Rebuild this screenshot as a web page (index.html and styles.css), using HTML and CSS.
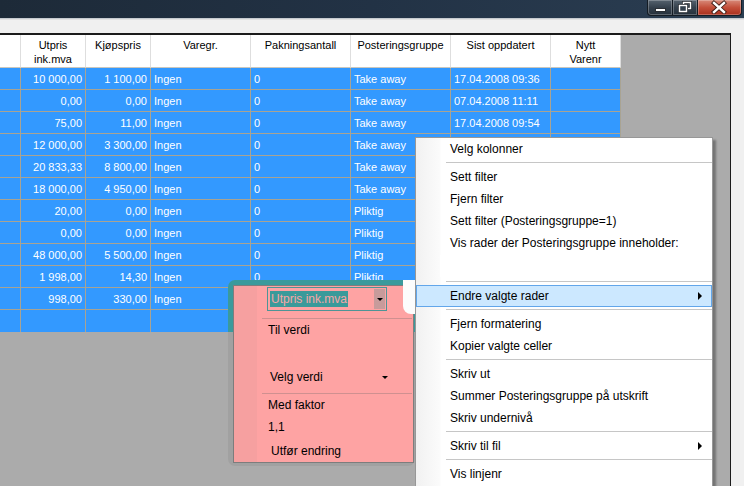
FILE: index.html
```html
<!DOCTYPE html>
<html>
<head>
<meta charset="utf-8">
<link rel="stylesheet" href="styles.css">
</head>
<body>
<div class="window">
  <div class="titlebar">
    <div class="winbtns">
      <div class="wb wb-min"><svg width="24" height="14" viewBox="0 0 24 14"><rect x="7.5" y="8.5" width="10" height="3" fill="#fff" stroke="#2a2f35" stroke-width="1"/></svg></div>
      <div class="wb wb-max"><svg width="23" height="14" viewBox="0 0 23 14"><rect x="10.5" y="2.5" width="7" height="6" fill="none" stroke="#2a2f35" stroke-width="3"/><rect x="10.5" y="2.5" width="7" height="6" fill="none" stroke="#fff" stroke-width="1.4"/><rect x="6.5" y="5.5" width="7" height="6" fill="#34414e" stroke="#2a2f35" stroke-width="3"/><rect x="6.5" y="5.5" width="7" height="6" fill="#34414e" stroke="#fff" stroke-width="1.4"/></svg></div>
      <div class="wb wb-close"><svg width="42" height="14" viewBox="0 0 42 14"><path d="M16 3 L26 12 M26 3 L16 12" stroke="#3a1a14" stroke-width="4.2" stroke-linecap="square"/><path d="M16 3 L26 12 M26 3 L16 12" stroke="#fff" stroke-width="2.4" stroke-linecap="square"/></svg></div>
    </div>
  </div>
  <div class="titleline"></div>
  <div class="toolstrip"></div>
  <div class="main">
    <div class="grid">
      <div class="row head">
        <div class="c"></div>
        <div class="c">Utpris<br>ink.mva</div>
        <div class="c">Kjøpspris</div>
        <div class="c">Varegr.</div>
        <div class="c">Pakningsantall</div>
        <div class="c">Posteringsgruppe</div>
        <div class="c">Sist oppdatert</div>
        <div class="c">Nytt<br>Varenr</div>
      </div>
      <div class="row"><div class="c"></div><div class="c r">10 000,00</div><div class="c r">1 100,00</div><div class="c">Ingen</div><div class="c">0</div><div class="c">Take away</div><div class="c">17.04.2008 09:36</div><div class="c"></div></div>
      <div class="row"><div class="c"></div><div class="c r">0,00</div><div class="c r">0,00</div><div class="c">Ingen</div><div class="c">0</div><div class="c">Take away</div><div class="c">07.04.2008 11:11</div><div class="c"></div></div>
      <div class="row"><div class="c"></div><div class="c r">75,00</div><div class="c r">11,00</div><div class="c">Ingen</div><div class="c">0</div><div class="c">Take away</div><div class="c">17.04.2008 09:54</div><div class="c"></div></div>
      <div class="row"><div class="c"></div><div class="c r">12 000,00</div><div class="c r">3 300,00</div><div class="c">Ingen</div><div class="c">0</div><div class="c">Take away</div><div class="c"></div><div class="c"></div></div>
      <div class="row"><div class="c"></div><div class="c r">20 833,33</div><div class="c r">8 800,00</div><div class="c">Ingen</div><div class="c">0</div><div class="c">Take away</div><div class="c"></div><div class="c"></div></div>
      <div class="row"><div class="c"></div><div class="c r">18 000,00</div><div class="c r">4 950,00</div><div class="c">Ingen</div><div class="c">0</div><div class="c">Take away</div><div class="c"></div><div class="c"></div></div>
      <div class="row"><div class="c"></div><div class="c r">20,00</div><div class="c r">0,00</div><div class="c">Ingen</div><div class="c">0</div><div class="c">Pliktig</div><div class="c"></div><div class="c"></div></div>
      <div class="row"><div class="c"></div><div class="c r">0,00</div><div class="c r">0,00</div><div class="c">Ingen</div><div class="c">0</div><div class="c">Pliktig</div><div class="c"></div><div class="c"></div></div>
      <div class="row"><div class="c"></div><div class="c r">48 000,00</div><div class="c r">5 500,00</div><div class="c">Ingen</div><div class="c">0</div><div class="c">Pliktig</div><div class="c"></div><div class="c"></div></div>
      <div class="row"><div class="c"></div><div class="c r">1 998,00</div><div class="c r">14,30</div><div class="c">Ingen</div><div class="c">0</div><div class="c">Pliktig</div><div class="c"></div><div class="c"></div></div>
      <div class="row"><div class="c"></div><div class="c r">998,00</div><div class="c r">330,00</div><div class="c">Ingen</div><div class="c"></div><div class="c"></div><div class="c"></div><div class="c"></div></div>
      <div class="row last"><div class="c"></div><div class="c r"></div><div class="c r"></div><div class="c"></div><div class="c"></div><div class="c"></div><div class="c"></div><div class="c"></div></div>
    </div>
    <div class="rightstrip"></div>
  </div>
</div>

<div class="popup-shadow"></div>
<div class="popup">
  <div class="pp-combo-row">
    <div class="pp-combo"><span class="pp-sel">Utpris ink.mva</span><span class="pp-btn"><span class="tri-down"></span></span></div>
  </div>
  <div class="pp-sep first"></div>
  <div class="pp-item">Til verdi</div>
  <div class="pp-blank"></div>
  <div class="pp-item pp-drop">Velg verdi<span class="tri-down"></span></div>
  <div class="pp-sep"></div>
  <div class="pp-item">Med faktor</div>
  <div class="pp-item">1,1</div>
  <div class="pp-item pp-act">Utfør endring</div>
</div>
<div class="patch"></div>

<div class="ctxmenu">
  <div class="mi">Velg kolonner</div>
  <div class="msep"></div>
  <div class="mi">Sett filter</div>
  <div class="mi">Fjern filter</div>
  <div class="mi">Sett filter (Posteringsgruppe=1)</div>
  <div class="mi">Vis rader der Posteringsgruppe inneholder:</div>
  <div class="mbox"><div class="mtext"></div></div>
  <div class="msep"></div>
  <div class="mi hl">Endre valgte rader<span class="tri-right"></span></div>
  <div class="msep"></div>
  <div class="mi">Fjern formatering</div>
  <div class="mi">Kopier valgte celler</div>
  <div class="msep"></div>
  <div class="mi">Skriv ut</div>
  <div class="mi">Summer Posteringsgruppe på utskrift</div>
  <div class="mi">Skriv undernivå</div>
  <div class="msep"></div>
  <div class="mi">Skriv til fil<span class="tri-right"></span></div>
  <div class="msep"></div>
  <div class="mi">Vis linjenr</div>
</div>
</body>
</html>
```

FILE: styles.css
```css
* { box-sizing: border-box; }
html, body {
  margin: 0;
  padding: 0;
  width: 744px;
  height: 486px;
  overflow: hidden;
  background: #f0f0f0;
  font-family: "Liberation Sans", Arial, sans-serif;
}
.window {
  display: flex;
  flex-direction: column;
  height: 486px;
}
.titlebar {
  height: 18px;
  background: linear-gradient(to right, #1d2a38 0%, #223245 50%, #2b3e52 100%);
  display: flex;
  justify-content: flex-end;
  padding-right: 2px;
}
.winbtns {
  display: flex;
  height: 16px;
}
.wb {
  height: 16px;
  border: 1px solid #141c24;
  border-top: none;
  box-shadow: inset 0 0 0 1px rgba(255,255,255,0.25);
  display: flex;
  align-items: flex-start;
}
.wb-min {
  width: 26px;
  border-bottom-left-radius: 4px;
  background: linear-gradient(#56636f, #35414d 50%, #26313c);
}
.wb-max {
  width: 25px;
  border-left: none;
  background: linear-gradient(#56636f, #35414d 50%, #26313c);
}
.wb-close {
  width: 44px;
  border-left: none;
  border-bottom-right-radius: 4px;
  background: linear-gradient(#d88a79, #c4503b 50%, #a92f1d);
}
.titleline {
  height: 2px;
  background: linear-gradient(#c5cacf 0 1px, #e2e2e2 1px);
}
.toolstrip {
  height: 13px;
  background: #f0f0f0;
}
.main {
  flex: 1;
  display: flex;
}
.grid {
  width: 731px;
  background: #ababab;
  border-top: 2px solid #1b1b1b;
  border-right: 1px solid #1b1b1b;
  display: flex;
  flex-direction: column;
}
.rightstrip {
  flex: 1;
  background: #f0f0f0;
}
.row {
  display: grid;
  grid-template-columns: 21px 65px 65px 100px 100px 100px 100px 70px;
  width: 621px;
  height: 22px;
}
.row .c {
  background: #3399ff;
  color: #fff;
  font-size: 11px;
  line-height: 22px;
  border-right: 1px solid #a9a392;
  border-bottom: 1px solid #a9a392;
  padding: 0 3px;
  white-space: nowrap;
  overflow: hidden;
}
.row.last .c { border-bottom: none; }
.row .c.r { text-align: right; }
.row.head { height: 33px; }
.row.head .c {
  background: #fff;
  color: #000;
  text-align: center;
  line-height: 14px;
  padding-top: 3px;
  border-right: 1px solid #dedede;
  border-bottom: 1px solid #c9c6bd;
}

/* pink popup */
.popup-shadow {
  position: absolute;
  left: 228px;
  top: 280px;
  width: 187px;
  height: 186px;
  border-radius: 7px;
  background: linear-gradient(#3a9a9c 0 52px, #a1a1a1 52px);
}
.popup {
  position: absolute;
  left: 233px;
  top: 285px;
  width: 181px;
  height: 178px;
  border: 1px solid #7d7d7d;
  background: linear-gradient(to right, #f6a0a0 0 23px, #fea3a3 23px);
  font-size: 12px;
  color: #000;
}
.pp-combo-row {
  padding-left: 33px;
  padding-top: 1px;
}
.pp-combo {
  width: 120px;
  height: 24px;
  border: 1px solid #4e9496;
  display: flex;
  align-items: center;
  justify-content: space-between;
  padding: 0 0 0 2px;
}
.pp-sel {
  background: #3a9a9a;
  color: #f6a6a6;
  line-height: 16px;
  padding: 0 1px;
}
.pp-btn {
  width: 11px;
  height: 20px;
  margin-right: 1px;
  background: #c79b9b;
  display: flex;
  align-items: center;
  justify-content: center;
}
.tri-down {
  width: 0;
  height: 0;
  border-left: 3px solid transparent;
  border-right: 3px solid transparent;
  border-top: 3px solid #000;
}
.pp-sep {
  height: 1px;
  margin: 5px 1px 0 28px;
  background: #cf9090;
}
.pp-sep.first { margin-top: 7px; }
.pp-item {
  height: 22px;
  line-height: 22px;
  padding-left: 34px;
}
.pp-blank { height: 25px; }
.pp-drop {
  padding-left: 36px;
  display: flex;
  align-items: center;
}
.pp-drop .tri-down { margin-left: 59px; }
.pp-act { padding-left: 37px; margin-top: 2px; }
.patch {
  position: absolute;
  left: 403px;
  top: 280px;
  width: 12px;
  height: 34px;
  background: #fcfcfc;
  border-bottom-left-radius: 8px;
}

/* context menu */
.ctxmenu {
  position: absolute;
  left: 415px;
  top: 137px;
  width: 298px;
  height: 370px;
  border: 1px solid #979797;
  background: linear-gradient(to right, #f1f1f1 0, #fbfbfb 24px, #ffffff 25px);
  box-shadow: 3px 3px 2px rgba(0,0,0,0.32);
  font-size: 12px;
  color: #000;
}
.mi {
  position: relative;
  height: 22px;
  line-height: 22px;
  padding-left: 34px;
  white-space: nowrap;
}
.mi.hl {
  background: #cce8ff;
  border: 1px solid #62a6ea;
  line-height: 20px;
  padding-left: 33px;
}
.msep {
  height: 6px;
  margin-left: 30px;
  background: linear-gradient(transparent 0 2px, #c6c6c6 2px 3px, transparent 3px);
}
.mbox {
  height: 25px;
  padding: 1px 0 0 24px;
}
.mtext {
  width: 107px;
  height: 22px;
  background: #fff;
}
.tri-right {
  position: absolute;
  right: 10px;
  top: 7px;
  width: 0;
  height: 0;
  border-top: 4px solid transparent;
  border-bottom: 4px solid transparent;
  border-left: 4px solid #000;
}
.mi.hl .tri-right { top: 6px; right: 9px; }
```
